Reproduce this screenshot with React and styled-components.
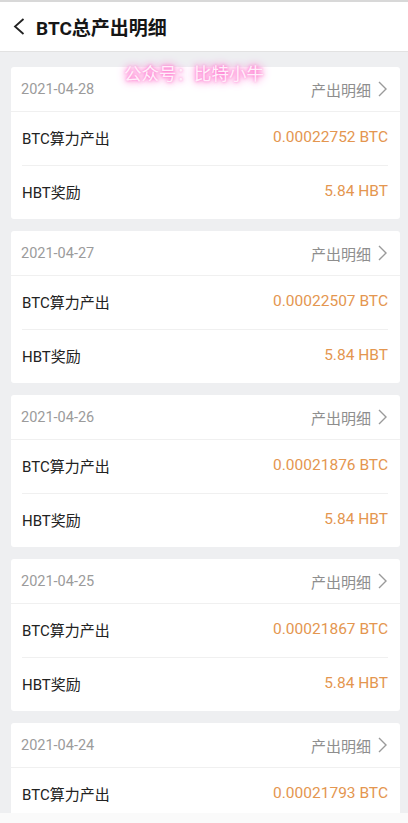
import React from "react"
import styled, { createGlobalStyle } from "styled-components"

const records = [
  { date: "2021-04-28", btc: "0.00022752", hbt: "5.84" },
  { date: "2021-04-27", btc: "0.00022507", hbt: "5.84" },
  { date: "2021-04-26", btc: "0.00021876", hbt: "5.84" },
  { date: "2021-04-25", btc: "0.00021867", hbt: "5.84" },
  { date: "2021-04-24", btc: "0.00021793" },
]

const GlobalStyle = createGlobalStyle`
  body {
    margin: 0;
    background: #eeeff1;
    font-family: Roboto, "Noto Sans CJK SC", sans-serif;
    overflow: hidden;
  }
`

function Chevron({ dir }) {
  if (dir === "left") {
    return (
      <svg width="14" height="17" viewBox="0 0 14 17" fill="none">
        <path d="M11.5 1 L3 8.5 L11.5 16" stroke="#222" strokeWidth="1.8" />
      </svg>
    )
  }
  return (
    <svg width="11" height="16" viewBox="0 0 11 16" fill="none">
      <path d="M2 1 L9 8 L2 15" stroke="#9a9a9a" strokeWidth="1.4" />
    </svg>
  )
}

function Card({ item }) {
  return (
    <Box>
      <DateRow>
        <DateText>{item.date}</DateText>
        <Link>
          产出明细
          <Chevron dir="right" />
        </Link>
      </DateRow>
      <Row last={!item.hbt}>
        <Label>BTC算力产出</Label>
        <Value>{item.btc} BTC</Value>
      </Row>
      {item.hbt && (
        <Row last>
          <Label>HBT奖励</Label>
          <Value>{item.hbt} HBT</Value>
        </Row>
      )}
    </Box>
  )
}

export default function App() {
  return (
    <>
      <GlobalStyle />
      <Page>
        <Header>
          <Chevron dir="left" />
          <Title>BTC总产出明细</Title>
        </Header>
        <List>
          {records.map((item) => <Card key={item.date} item={item} />)}
        </List>
        <BottomBar />
        <Watermark>公众号：比特小牛</Watermark>
      </Page>
    </>
  )
}

const Page = styled.div`
  position: relative;
  width: 408px;
  height: 823px;
  display: flex;
  flex-direction: column;
  background: #eeeff1;
  border-top: 2px solid #d8d8d8;
  box-sizing: border-box;
  overflow: hidden;
`

const Header = styled.div`
  flex: none;
  height: 49px;
  background: #ffffff;
  border-bottom: 1px solid #e2e2e2;
  display: flex;
  align-items: center;
  padding-left: 12px;
  gap: 10px;
`

const Title = styled.div`
  font-size: 19px;
  font-weight: 700;
  color: #161616;
`

const List = styled.div`
  flex: 1;
  overflow: hidden;
  display: flex;
  flex-direction: column;
  gap: 12px;
  padding: 15px 8px 0 11px;
`

const Box = styled.div`
  flex: none;
  background: #ffffff;
  border-radius: 3px;
`

const DateRow = styled.div`
  height: 44px;
  display: flex;
  align-items: center;
  justify-content: space-between;
  padding: 0 12px 0 10px;
  border-bottom: 1px solid #f0f0f0;
`

const DateText = styled.span`
  font-size: 14.5px;
  color: #9b9b9b;
`

const Link = styled.span`
  display: flex;
  align-items: center;
  gap: 6px;
  font-size: 15px;
  color: #8e8e8e;
`

const Row = styled.div`
  height: 50px;
  padding-bottom: 3px;
  margin: 0 12px 0 11px;
  display: flex;
  align-items: center;
  justify-content: space-between;
  border-bottom: ${(p) => (p.last ? "none" : "1px solid #f0f0f0")};
`

const Label = styled.span`
  font-size: 15px;
  color: #222222;
`

const Value = styled.span`
  font-size: 15.5px;
  color: #e4964f;
`

const BottomBar = styled.div`
  flex: none;
  height: 10px;
  background: #fafafa;
`

const Watermark = styled.div`
  position: absolute;
  left: 124px;
  top: 58px;
  font-size: 17.5px;
  color: #ffeefa;
  text-shadow: 0 0 3px #ff70cc, 0 0 6px #ff70cc, 0 0 10px #ff9ad8, 0 0 14px #ffc0e8;
`
